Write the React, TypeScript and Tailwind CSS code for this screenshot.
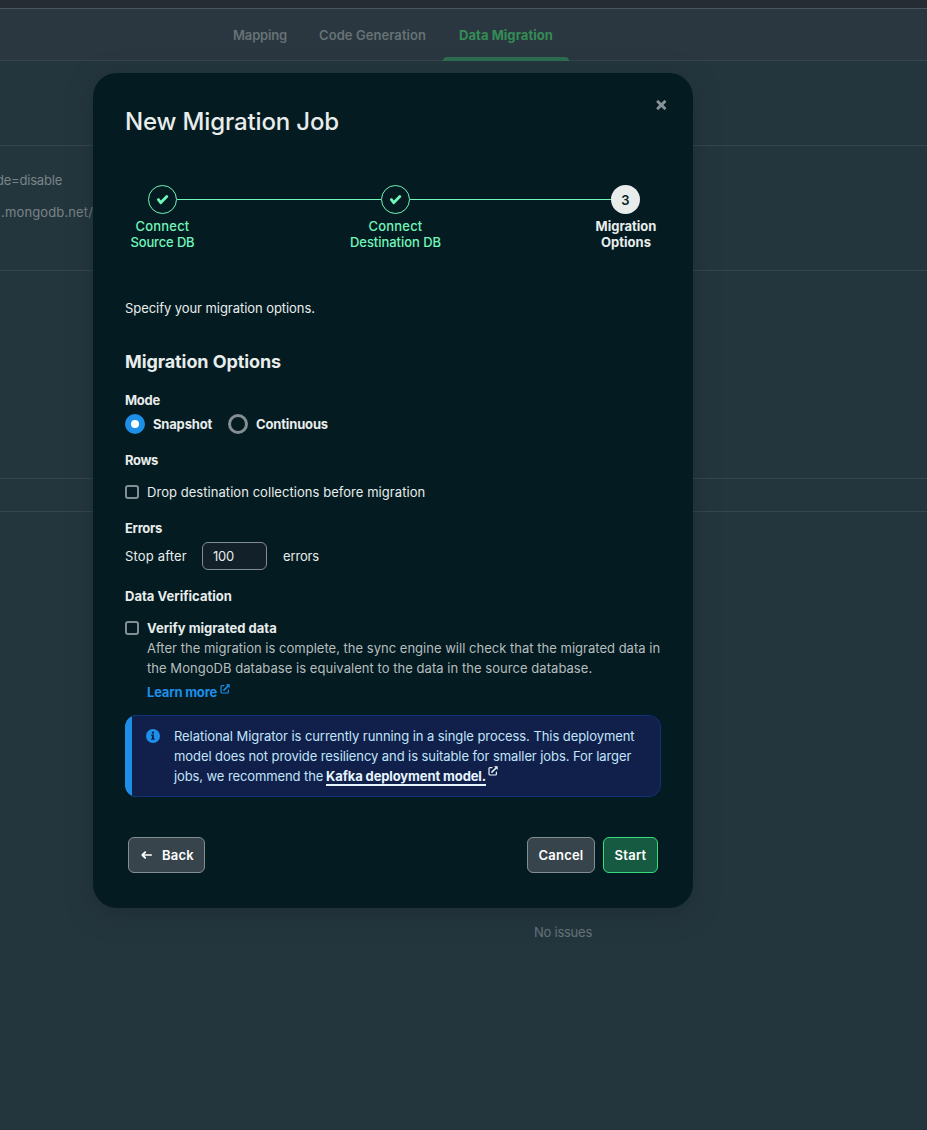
import type { ReactNode } from "react";

function CheckGlyph() {
  return (
    <svg width="15" height="15" viewBox="0 0 16 16" fill="currentColor" className="mr-px">
      <path d="M6.306 9.05L11.761 3.595a1 1 0 0 1 1.414 0l.707.707a1 1 0 0 1 0 1.414L6.815 12.784a1 1 0 0 1-1.5-.098L2.266 8.716a1 1 0 0 1 .184-1.402l.595-.457a1.25 1.25 0 0 1 1.753.23L6.306 9.05Z" />
    </svg>
  );
}

function CloseGlyph() {
  return (
    <svg width="16" height="16" viewBox="0 0 16 16" fill="currentColor">
      <path d="M12.203 3.404a1 1 0 0 0-1.414 0L8.314 5.879 5.839 3.404a1 1 0 0 0-1.414 0l-.707.707a1 1 0 0 0 0 1.414L6.192 8l-2.474 2.475a1 1 0 0 0 0 1.414l.707.707a1 1 0 0 0 1.414 0l2.475-2.475 2.475 2.475a1 1 0 0 0 1.414 0l.707-.707a1 1 0 0 0 0-1.414L10.435 8l2.475-2.475a1 1 0 0 0 0-1.414l-.707-.707Z" />
    </svg>
  );
}

function OpenNewTabGlyph() {
  return (
    <svg width="10" height="10" viewBox="0 0 10 10" fill="none" stroke="currentColor">
      <path d="M4 1.6H1.9a.9.9 0 0 0-.9.9v5.6a.9.9 0 0 0 .9.9h5.6a.9.9 0 0 0 .9-.9V6" strokeWidth="1.2" strokeLinecap="round" />
      <path d="M3.9 6.1 7.8 2.2" strokeWidth="1.5" strokeLinecap="round" />
      <path d="M5.9.3h3.5a.3.3 0 0 1 .3.3v3.5z" fill="currentColor" stroke="none" />
    </svg>
  );
}

function ArrowLeftGlyph() {
  return (
    <svg width="12" height="10" viewBox="0 0 12 10" fill="none" stroke="currentColor" strokeLinecap="round" strokeLinejoin="round">
      <path d="M2 5h8.2" strokeWidth="1.7" />
      <path d="M4.2 2.2 1.4 5l2.8 2.8" strokeWidth="1.9" />
    </svg>
  );
}

function InfoGlyph() {
  return (
    <svg width="14" height="14" viewBox="0 0 14 14">
      <circle cx="7" cy="7" r="7" fill="#1e8fe8" />
      <circle cx="7" cy="3.7" r="1.15" fill="#11204a" />
      <path d="M5.1 5.6h2.8v4h.9v1.2H5.1V9.6h.9V6.8h-.9z" fill="#11204a" />
    </svg>
  );
}

function Title({ className, children }: { className: string; children: ReactNode }) {
  return <h3 className={`h-5 leading-5 font-bold ${className}`}>{children}</h3>;
}

function Checkbox() {
  return <span className="h-3.5 w-3.5 shrink-0 rounded-[3px] border-2 border-[#838e92]" />;
}

function DoneStep() {
  return (
    <span className="flex h-[29px] w-[29px] shrink-0 items-center justify-center rounded-full border border-[#71f6ba] text-[#71f6ba]">
      <CheckGlyph />
    </span>
  );
}

function Backdrop() {
  return (
    <div className="flex h-full flex-col">
      <div className="h-[9px] shrink-0 border-b border-[#4a565a] bg-[#252c33]" />
      <nav className="flex h-[52px] shrink-0 border-b border-[#36464d] bg-[#2b3740] pl-[217px] font-semibold text-[#667276]">
        <div className="h-[52px] w-[86px] px-4 leading-[53px] tracking-[-0.16px]">Mapping</div>
        <div className="h-[52px] w-[140px] px-4 leading-[53px] tracking-[0.07px]">Code Generation</div>
        <div className="relative h-[52px] w-[126px] px-4 leading-[53px] font-bold tracking-[0.05px] text-[#348c55]">
          Data Migration
          <span className="absolute bottom-0 left-0 h-1 w-full rounded-t-[4px] bg-[#2f6d50]" />
        </div>
      </nav>
      <div className="h-[85px] shrink-0 border-b border-[#36464d]" />
      <div className="flex h-[125px] shrink-0 flex-col border-b border-[#36464d] pt-[23px] leading-[22px] text-[#7a8487]">
        <div className="flex w-[62px] justify-end overflow-hidden whitespace-nowrap tracking-[-0.21px]">de=disable</div>
        <div className="mt-2.5 flex w-[93px] justify-end overflow-hidden whitespace-nowrap tracking-[0.13px]">.mongodb.net/</div>
      </div>
      <div className="h-[208px] shrink-0 border-b border-[#36464d]" />
      <div className="h-[33px] shrink-0 border-b border-[#36464d]" />
      <div className="grow pt-[409px] pl-[534px] leading-[22px] tracking-[-0.25px] text-[#68747a]">No issues</div>
      <div className="h-px shrink-0 bg-[#203039]" />
    </div>
  );
}

function Stepper() {
  return (
    <div className="mt-12">
      <div className="flex items-center pr-[21px] pl-[23px]">
        <DoneStep />
        <span className="h-px w-[204px] bg-[#71f6ba]" />
        <DoneStep />
        <span className="h-px w-[201px] bg-[#71f6ba]" />
        <span className="flex h-[29px] w-[29px] items-center justify-center rounded-full bg-[#e8edeb] pt-px font-semibold text-[#061b23]">
          3
        </span>
      </div>
      <div className="mt-1 flex justify-between text-center leading-4 font-medium text-[#71f6ba]">
        <div className="w-[75px]">
          <div className="tracking-[0.2px]">Connect</div>
          <div className="tracking-[-0.15px]">Source DB</div>
        </div>
        <div className="w-[93px]">
          <div className="tracking-[0.2px]">Connect</div>
          <div className="tracking-[-0.05px]">Destination DB</div>
        </div>
        <div className="w-[70px] font-bold text-[#e8edeb]">
          <div>Migration</div>
          <div>Options</div>
        </div>
      </div>
    </div>
  );
}

function Callout() {
  return (
    <div className="mt-[13px] flex h-[82px] overflow-hidden rounded-xl bg-[linear-gradient(to_right,#1e8fe8_50%,transparent_50%)]">
      <div className="ml-[7px] flex grow rounded-r-xl border-y border-r border-[#0f3478] bg-[#11204a] pt-[11px] pl-3.5">
        <div className="pt-[2px]">
          <InfoGlyph />
        </div>
        <div className="-mt-px ml-3.5 leading-5 whitespace-nowrap text-[#c1e5fb]">
          <div className="tracking-[-0.065px]">Relational Migrator is currently running in a single process. This deployment</div>
          <div className="tracking-[-0.08px]">model does not provide resiliency and is suitable for smaller jobs. For larger</div>
          <div className="flex">
            <span className="w-[152px] tracking-[-0.1px]">jobs, we recommend the</span>
            <a className="flex text-[#e6f5ff]">
              <span className="h-5 border-b-2 border-[#e6f5ff] font-bold tracking-[-0.115px]">Kafka deployment model.</span>
              <span className="ml-[2px]">
                <OpenNewTabGlyph />
              </span>
            </a>
          </div>
        </div>
      </div>
    </div>
  );
}

function Modal() {
  return (
    <div className="absolute top-[73px] left-[93px] h-[835px] w-[600px] rounded-3xl bg-[#041b22] px-8 pt-8 leading-5 text-[#e8edeb] shadow-[0_6px_24px_rgba(28,38,52,0.55)]">
      <button className="absolute top-6 right-6 text-[#889397]">
        <CloseGlyph />
      </button>
      <h1 className="h-8 text-2xl leading-[34px] font-medium tracking-[-0.145px]">New Migration Job</h1>
      <Stepper />
      <p className="mt-12 leading-5 tracking-[-0.06px]">Specify your migration options.</p>
      <h2 className="mt-8 text-lg leading-6 font-bold tracking-[-0.09px]">Migration Options</h2>

      <Title className="mt-4 tracking-[-0.25px]">Mode</Title>
      <div className="mt-1 flex h-5 items-center font-bold">
        <span className="flex h-5 w-5 items-center justify-center rounded-full bg-[#1e8fe8]">
          <span className="h-2 w-2 rounded-full bg-white" />
        </span>
        <span className="ml-2 w-[59px] tracking-[-0.18px]">Snapshot</span>
        <span className="ml-4 h-5 w-5 rounded-full border-[3px] border-[#838e92]" />
        <span className="ml-2 tracking-[-0.15px]">Continuous</span>
      </div>

      <Title className="mt-4 tracking-[-0.37px]">Rows</Title>
      <div className="mt-3 flex h-5 items-center gap-2">
        <Checkbox />
        <span className="tracking-[0.05px]">Drop destination collections before migration</span>
      </div>

      <Title className="mt-4 tracking-[-0.3px]">Errors</Title>
      <div className="mt-1 flex h-7 items-center">
        <span className="w-[77px] tracking-[0.18px]">Stop after</span>
        <span className="flex h-7 w-[65px] items-center rounded-md border border-[#838e92] bg-[#112029] pl-2.5 tracking-[-0.2px]">100</span>
        <span className="ml-4 tracking-[-0.15px]">errors</span>
      </div>

      <Title className="mt-4 tracking-[0.03px]">Data Verification</Title>
      <div className="mt-3 flex h-5 items-center gap-2">
        <Checkbox />
        <span className="font-bold">Verify migrated data</span>
      </div>
      <div className="pl-[22px] leading-5 whitespace-nowrap text-[#b6bebe]">
        <div className="tracking-[0.015px]">After the migration is complete, the sync engine will check that the migrated data in</div>
        <div className="tracking-[0.045px]">the MongoDB database is equivalent to the data in the source database.</div>
        <a className="mt-1 flex h-5 text-[#1e8fe8]">
          <span className="w-[73px] font-bold tracking-[-0.19px]">Learn more</span>
          <span className="pt-[2px]">
            <OpenNewTabGlyph />
          </span>
        </a>
      </div>

      <Callout />

      <div className="mt-10 flex h-9 items-center px-[3px] font-semibold text-white">
        <button className="flex h-9 w-[77px] items-center rounded-md border border-[#838e92] bg-[#37444c] pl-3">
          <ArrowLeftGlyph />
          <span className="ml-[9px] tracking-[0.2px]">Back</span>
        </button>
        <button className="ml-auto h-9 w-[68px] rounded-md border border-[#838e92] bg-[#37444c] tracking-[0.22px]">Cancel</button>
        <button className="ml-2 h-9 w-[55px] rounded-md border border-[#35de7b] bg-[#175a42] tracking-[0.28px]">Start</button>
      </div>
    </div>
  );
}

export default function App() {
  return (
    <div className="relative h-[1130px] w-full overflow-hidden bg-[#24363d] font-['Inter',sans-serif] text-[13px]">
      <Backdrop />
      <Modal />
    </div>
  );
}
